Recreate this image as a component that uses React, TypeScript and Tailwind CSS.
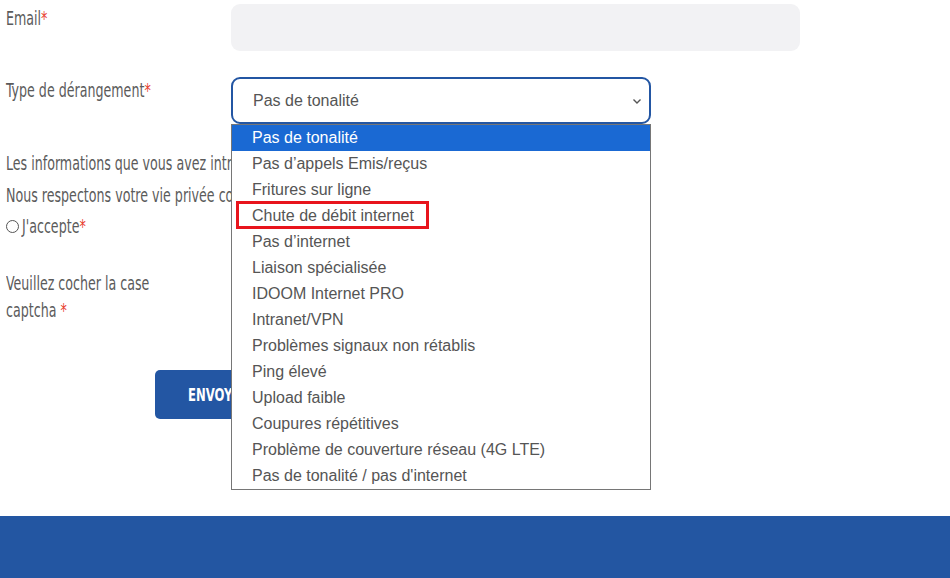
import React from 'react';

const OPTIONS = [
  'Pas de tonalité',
  'Pas d’appels Emis/reçus',
  'Fritures sur ligne',
  'Chute de débit internet',
  'Pas d’internet',
  'Liaison spécialisée',
  'IDOOM Internet PRO',
  'Intranet/VPN',
  'Problèmes signaux non rétablis',
  'Ping élevé',
  'Upload faible',
  'Coupures répétitives',
  'Problème de couverture réseau (4G LTE)',
  "Pas de tonalité / pas d'internet",
];

const labelFont = { fontFamily: '"DejaVu Sans Condensed", "DejaVu Sans", sans-serif' };

const Star = () => <span className="text-[#e8412f]">*</span>;

// condensed label text (Oswald-like)
const Narrow: React.FC<{ children: React.ReactNode; className?: string }> = ({ children, className }) => (
  <span className={'inline-block origin-left whitespace-nowrap ' + (className ?? 'scale-x-[0.74]')} style={labelFont}>
    {children}
  </span>
);

const App: React.FC = () => {
  return (
    <div className="relative w-[950px] h-[578px] bg-white overflow-hidden" style={{ fontFamily: '"Liberation Sans", Arial, sans-serif' }}>
      <div className="flex flex-col">
        {/* email */}
        <div className="flex pt-[4px]">
          <div className="w-[231px] pl-[6px] pt-[1px] text-[19px] text-[#5b5b5b] leading-[26px]">
            <Narrow>Email<Star /></Narrow>
          </div>
          <div className="w-[569px] h-[47px] rounded-[9px] bg-[#f2f2f4]" />
        </div>

        {/* type */}
        <div className="flex mt-[26px]">
          <div className="w-[231px] pl-[6px] text-[19px] text-[#5b5b5b] leading-[26px]">
            <Narrow>Type de dérangement<Star /></Narrow>
          </div>
          <div className="w-[420px] h-[47px] rounded-[9px] border-2 border-[#2356a3] flex items-center justify-between pl-[20px] pr-[7px]">
            <span className="text-[16px] text-[#555]">Pas de tonalité</span>
            <svg width="10" height="10" viewBox="0 0 10 10" className="text-[#555]">
              <path d="M1.5 3.5 L5 7 L8.5 3.5" fill="none" stroke="currentColor" strokeWidth="1.4" />
            </svg>
          </div>
        </div>

        {/* notice (partly covered by the open list) */}
        <div className="pl-[6px] mt-[23px] text-[19px] text-[#5b5b5b] leading-[26px]">
          <div className="h-[32px] flex items-center">
            <Narrow>Les informations que vous avez introduites sont confidentielles et protégées.</Narrow>
          </div>
          <div className="h-[32px] flex items-center">
            <Narrow>Nous respectons votre vie privée conformément à la réglementation en vigueur.</Narrow>
          </div>
          <div className="h-[30px] flex items-center gap-[3px]">
            <span className="inline-block shrink-0 w-[13px] h-[13px] rounded-full border border-[#555]" />
            <Narrow>J'accepte<Star /></Narrow>
          </div>
        </div>

        {/* captcha */}
        <div className="pl-[6px] mt-[28px] text-[19px] text-[#5b5b5b] leading-[26px]">
          <div className="h-[27px] flex items-center"><Narrow>Veuillez cocher la case</Narrow></div>
          <div className="h-[27px] flex items-center"><Narrow>captcha <Star /></Narrow></div>
        </div>

        {/* button */}
        <div className="pl-[155px] mt-[47px]">
          <button className="w-[150px] h-[49px] pl-[33px] text-left rounded-[5px] bg-[#2356a3] text-white text-[18px] font-bold">
            <Narrow className="scale-x-[0.72]">ENVOYER</Narrow>
          </button>
        </div>

        {/* footer */}
        <div className="mt-[97px] h-[62px] bg-[#2356a2]" />
      </div>

      {/* open select list */}
      <ul className="absolute left-[231px] top-[124px] w-[420px] bg-white border border-[#767676] text-[16px]">
        {OPTIONS.map((o, i) => (
          <li
            key={o}
            className={
              'h-[26px] leading-[26px] pl-[20px] ' +
              (i === 0 ? 'bg-[#1a69d3] text-white' : 'text-[#555]')
            }
          >
            {o}
          </li>
        ))}
      </ul>

      {/* highlight box */}
      <div className="absolute left-[236px] top-[201px] w-[193px] h-[28px] border-[3px] border-[#e8141c]" />
    </div>
  );
};

export default App;
